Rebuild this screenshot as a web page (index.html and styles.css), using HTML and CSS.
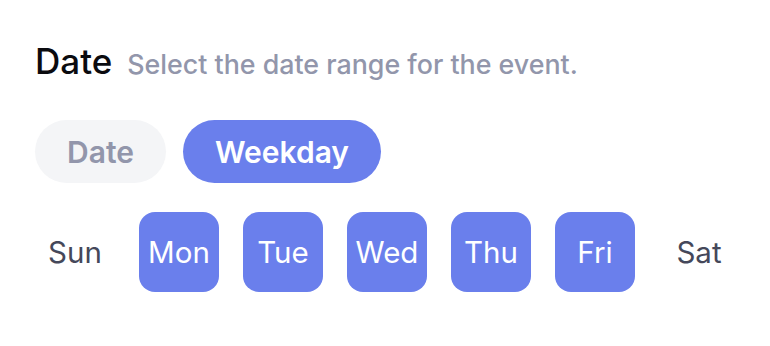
FILE: index.html
```html
<!DOCTYPE html>
<html lang="en">
<head>
  <meta charset="UTF-8">
  <title>Date range</title>
  <link rel="stylesheet" href="styles.css">
</head>
<body>

  <div class="field-head">
    <h2 class="field-title">Date</h2>
    <span class="field-hint">Select the date range for the event.</span>
  </div>

  <div class="mode-switch">
    <button class="mode-btn">Date</button>
    <button class="mode-btn active">Weekday</button>
  </div>

  <div class="day-row">
    <button class="day">Sun</button>
    <button class="day on">Mon</button>
    <button class="day on">Tue</button>
    <button class="day on">Wed</button>
    <button class="day on">Thu</button>
    <button class="day on">Fri</button>
    <button class="day">Sat</button>
  </div>

</body>
</html>
```

FILE: styles.css
```css
body { margin: 0; padding: 44px 0 0 35px; font-family: Inter, "Noto Sans", sans-serif; background: #fff; }
button { font-family: inherit; border: 0; cursor: pointer; }

.field-head { display: flex; align-items: baseline; gap: 15px; line-height: 1; }
.field-title { margin: 0; font-size: 35px; font-weight: 500; color: #0b0b0f; }
.field-hint { font-size: 26.8px; font-weight: 500; color: #9296ab; }

.mode-switch { display: flex; gap: 17px; margin-top: 41px; }
.mode-btn {
  height: 63px;
  padding: 0 32px;
  border-radius: 32px;
  font-size: 30px;
  font-weight: 600;
  background: #f4f5f7;
  color: #9296ab;
}
.mode-btn.active { background: #6a7fec; color: #fff; }

.day-row { display: flex; gap: 24px; margin-top: 29px; }
.day {
  flex: none;
  width: 80px;
  height: 80px;
  padding: 0;
  border-radius: 16px;
  font-size: 29.5px;
  background: transparent;
  color: #45485a;
}
.day.on { background: #6a7fec; color: #fff; }
```
